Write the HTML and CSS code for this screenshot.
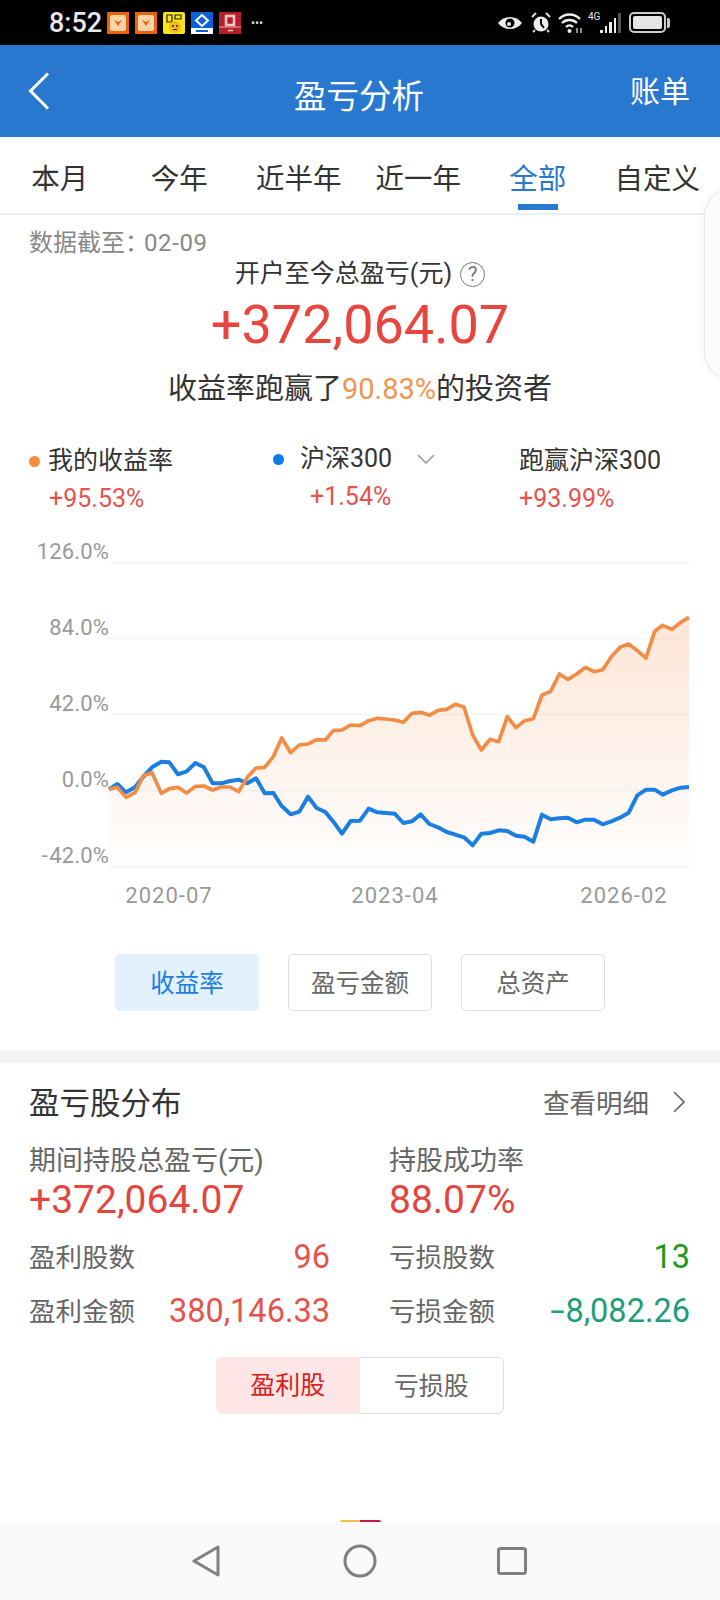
FILE: index.html
```html
<!DOCTYPE html>
<html lang="zh-CN">
<head>
    <meta charset="UTF-8">
    <meta name="viewport" content="width=device-width, initial-scale=1.0">
    <title>盈亏分析</title>
    <link rel="stylesheet" href="styles.css">
</head>
<body>
    <div class="page">
        <div class="status">
            <span class="clock">8:52</span>
            <div class="notes">
                <svg class="note" viewBox="0 0 22 22"><rect width="22" height="22" fill="#e8620f"/><rect x="3" y="3" width="16" height="16" rx="2" fill="#fbd3a4"/><path d="M7 8l4 2 4-2-4 6z" fill="#e8620f"/></svg>
                <svg class="note" viewBox="0 0 22 22"><rect width="22" height="22" fill="#e8620f"/><rect x="3" y="3" width="16" height="16" rx="2" fill="#fbd3a4"/><path d="M7 8l4 2 4-2-4 6z" fill="#e8620f"/></svg>
                <svg class="note" viewBox="0 0 22 22"><rect width="22" height="22" rx="2" fill="#f7e41c"/><path d="M4 3h5v7H4zM12 3h6v4h-6z" fill="none" stroke="#222" stroke-width="1.2"/><circle cx="12" cy="15" r="6" fill="#fbb81a"/><circle cx="10" cy="14" r="1" fill="#222"/><circle cx="14" cy="14" r="1" fill="#222"/><path d="M10 17.500h4" stroke="#222"/></svg>
                <svg class="note" viewBox="0 0 22 22"><rect width="22" height="22" fill="#0b62d6"/><path d="M11 3l6 5.500-6 5.500-6-5.500z" fill="none" stroke="#fff" stroke-width="2"/><rect y="16" width="22" height="6" fill="#fff"/><rect x="5" y="18" width="12" height="2" fill="#0b62d6"/></svg>
                <svg class="note" viewBox="0 0 22 22"><rect width="22" height="22" fill="#b51f2b"/><path d="M7 4h8v9H7z" fill="none" stroke="#f6c9c4" stroke-width="2.500"/><path d="M0 15h22" stroke="#f0a5a0" stroke-width="1"/><path d="M9 18.500h5" stroke="#f6c9c4" stroke-width="1.500"/></svg>
            </div>
            <span class="more">•••</span>
            <div class="sys">
                <svg class="eye" viewBox="0 0 26 14"><path d="M1 7c6-8 18-8 24 0-6 8-18 8-24 0z" fill="#eee"/><circle cx="13" cy="7" r="4.500" fill="#000"/><circle cx="12" cy="8" r="2" fill="#eee"/></svg>
                <svg class="alarm" viewBox="0 0 22 21"><circle cx="11" cy="12" r="7.500" fill="#eee"/><path d="M11 7v5l3 4" fill="none" stroke="#000" stroke-width="2"/><path d="M2 5l4-4M20 5l-4-4M5 18l-2 2M17 18l2 2" stroke="#ddd" stroke-width="2"/></svg>
                <svg class="wifi" viewBox="0 0 25 20"><path d="M1 6c6-6 15-6 21 0M4 10c4-4 11-4 15 0M8 14c2-2 5-2 7 0" fill="none" stroke="#eee" stroke-width="2.400"/><circle cx="11.500" cy="18" r="2" fill="#eee"/><path d="M19 15v5M23 15v5" stroke="#bbb" stroke-width="1.500"/></svg>
                <span class="net">4G</span>
                <div class="bars">
                    <i class="b1"></i><i class="b2"></i><i class="b3"></i><i class="b4"></i><i class="b5"></i>
                </div>
                <div class="batt"><span class="batt-fill"></span></div>
                <span class="batt-nub"></span>
            </div>
        </div>

        <div class="topbar">
            <svg class="back" viewBox="0 0 22 38"><path d="M20 1.500L2.500 19 20 36.500" fill="none" stroke="#fff" stroke-width="3"/></svg>
            <div class="title">盈亏分析</div>
            <div class="bill">账单</div>
        </div>

        <div class="tabs">
            <div class="tab">本月</div>
            <div class="tab">今年</div>
            <div class="tab">近半年</div>
            <div class="tab">近一年</div>
            <div class="tab on">全部</div>
            <div class="tab">自定义</div>
        </div>

        <div class="summary">
            <div class="asof">数据截至：<span class="asof-date">02-09</span></div>
            <div class="total-label">开户至今总盈亏(元)<span class="help">?</span></div>
            <div class="total">+372,064.07</div>
            <div class="beat">收益率跑赢了<span class="beat-num">90.83%</span>的投资者</div>
        </div>

        <div class="stats">
            <div class="stat">
                <div class="stat-head"><i class="dot dot-mine"></i>我的收益率</div>
                <div class="stat-val val-mine">+95.53%</div>
            </div>
            <div class="stat">
                <div class="stat-head head-idx"><i class="dot dot-idx"></i>沪深300
                    <svg class="caret" viewBox="0 0 18 10"><path d="M1 1l8 8 8-8" fill="none" stroke="#999" stroke-width="1.500"/></svg>
                </div>
                <div class="stat-val val-idx">+1.54%</div>
            </div>
            <div class="stat">
                <div class="stat-head">跑赢沪深300</div>
                <div class="stat-val">+93.99%</div>
            </div>
        </div>

        <svg class="chart" viewBox="0 0 2160 1140">
            <defs>
                <linearGradient id="area" gradientUnits="userSpaceOnUse" x1="0" y1="262" x2="0" y2="1010">
                    <stop offset="0" stop-color="#f58a45" stop-opacity="0.22"/>
                    <stop offset="1" stop-color="#f58a45" stop-opacity="0.01"/>
                </linearGradient>
            </defs>
            <g class="grid">
                <path d="M327 98H2067M327 326H2067M327 553H2067M327 782H2067M327 1010H2067"/>
            </g>
            <polygon fill="url(#area)" points="327,1010 327,778 352,772 378,802 405,788 430,737 456,728 484,790 508,776 534,772 560,789 586,769 612,768 638,780 664,771 690,771 716,785 742,742 768,714 794,712 820,680 845,624 872,668 898,645 924,642 950,629 976,630 1000,602 1026,600 1052,585 1080,587 1106,572 1132,565 1158,567 1184,570 1210,577 1236,550 1262,547 1288,556 1314,541 1340,538 1366,523 1392,531 1418,615 1444,660 1470,628 1496,635 1522,560 1548,593 1574,572 1600,566 1626,495 1652,484 1678,432 1704,448 1730,432 1756,412 1782,425 1808,419 1834,380 1860,352 1886,342 1912,362 1938,384 1964,304 1988,286 2016,298 2042,277 2067,262 2067,1010"/>
            <polyline class="line-idx" points="327,778 352,762 378,787 405,772 430,740 456,712 484,695 508,697 534,733 560,724 586,699 612,712 638,760 664,760 690,753 716,749 742,760 768,745 794,790 820,789 845,828 872,853 898,845 924,800 950,834 976,846 1000,875 1026,911 1052,873 1080,872 1106,836 1132,847 1158,849 1184,851 1210,879 1236,874 1262,853 1288,882 1314,892 1340,906 1366,914 1392,922 1418,946 1444,911 1470,909 1496,901 1522,903 1548,917 1574,920 1600,935 1626,854 1652,868 1678,865 1704,863 1730,877 1756,869 1782,869 1808,883 1834,874 1860,863 1886,848 1912,796 1938,779 1964,779 1988,794 2016,781 2042,773 2067,771"/>
            <polyline class="line-mine" points="327,778 352,772 378,802 405,788 430,737 456,728 484,790 508,776 534,772 560,789 586,769 612,768 638,780 664,771 690,771 716,785 742,742 768,714 794,712 820,680 845,624 872,668 898,645 924,642 950,629 976,630 1000,602 1026,600 1052,585 1080,587 1106,572 1132,565 1158,567 1184,570 1210,577 1236,550 1262,547 1288,556 1314,541 1340,538 1366,523 1392,531 1418,615 1444,660 1470,628 1496,635 1522,560 1548,593 1574,572 1600,566 1626,495 1652,484 1678,432 1704,448 1730,432 1756,412 1782,425 1808,419 1834,380 1860,352 1886,342 1912,362 1938,384 1964,304 1988,286 2016,298 2042,277 2067,262"/>
            <g class="axis-y">
                <text x="327" y="88">126.0%</text>
                <text x="327" y="316">84.0%</text>
                <text x="327" y="543">42.0%</text>
                <text x="327" y="771">0.0%</text>
                <text x="327" y="998"><tspan class="neg">-</tspan>42.0%</text>
            </g>
            <g class="axis-x">
                <text x="507" y="1120">2020-07</text>
                <text x="1185" y="1120">2023-04</text>
                <text x="1872" y="1120">2026-02</text>
            </g>
        </svg>

        <div class="modes">
            <div class="mode on">收益率</div>
            <div class="mode">盈亏金额</div>
            <div class="mode">总资产</div>
        </div>

        <div class="band"></div>

        <div class="dist">
            <div class="dist-head">
                <div class="dist-title">盈亏股分布</div>
                <div class="dist-link">查看明细
                    <svg class="link-arrow" viewBox="0 0 12 22"><path d="M1 1l10 10L1 21" fill="none" stroke="#666" stroke-width="1.600"/></svg>
                </div>
            </div>
            <div class="dist-grid">
                <div>
                    <div class="dist-label">期间持股总盈亏(元)</div>
                    <div class="dist-big">+372,064.07</div>
                </div>
                <div>
                    <div class="dist-label">持股成功率</div>
                    <div class="dist-big">88.07%</div>
                </div>
                <div class="dist-row"><span>盈利股数</span><b class="up">96</b></div>
                <div class="dist-row"><span>亏损股数</span><b class="count-down">13</b></div>
                <div class="dist-row row-gap"><span>盈利金额</span><b class="up">380,146.33</b></div>
                <div class="dist-row row-gap"><span>亏损金额</span><b class="down"><span class="neg-wide">-</span>8,082.26</b></div>
            </div>
            <div class="switch">
                <div class="switch-item on">盈利股</div>
                <div class="switch-item">亏损股</div>
            </div>
        </div>

        <div class="peek"></div>

        <div class="nav">
            <svg class="nav-icon nav-back" viewBox="0 0 28 32"><path d="M26 2v28L2 16z" fill="none" stroke="#808080" stroke-width="3" stroke-linejoin="round"/></svg>
            <svg class="nav-icon nav-home" viewBox="0 0 34 34"><circle cx="17" cy="17" r="15" fill="none" stroke="#808080" stroke-width="3"/></svg>
            <svg class="nav-icon nav-recent" viewBox="0 0 30 28"><rect x="1.500" y="1.500" width="27" height="25" rx="2" fill="none" stroke="#808080" stroke-width="3"/></svg>
        </div>

        <div class="drawer"></div>
    </div>
</body>
</html>
```

FILE: styles.css
```css
* { box-sizing: border-box; }
body { margin: 0; background: white; font-family: Roboto, "Noto Sans CJK SC", sans-serif; color: #333; }
.page { position: relative; width: 720px; height: 1600px; display: flex; flex-direction: column; overflow: hidden; }

/* status bar */
.status { height: 45px; background: black; color: #e8e8e8; display: flex; align-items: center; padding-left: 49px; }
.clock { font-size: 27px; font-weight: 500; width: 58px; }
.notes { display: flex; gap: 6px; }
.note { width: 22px; height: 22px; display: block; }
.more { font-size: 12px; letter-spacing: 0; margin-left: 10px; color: #ddd; }
.sys { margin-left: auto; display: flex; align-items: center; padding-right: 50px; }
.eye { width: 26px; height: 14px; margin-right: 7px; }
.alarm { width: 22px; height: 21px; margin-right: 6px; }
.wifi { width: 25px; height: 20px; margin-right: 5px; }
.net { font-size: 10px; width: 12px; align-self: flex-start; margin-top: 0; line-height: 10px; }
.bars { display: flex; align-items: flex-end; gap: 2px; height: 20px; width: 21px; margin-right: 8px; }
.bars i { width: 3px; background: #eee; display: block; }
.b1 { height: 3px; }
.b2 { height: 7px; }
.b3 { height: 11px; }
.b4 { height: 15px; }
.b5 { height: 20px; background: #555 !important; }
.batt { width: 37px; height: 21px; border: 2px solid #ccc; border-radius: 5px; padding: 2px; }
.batt-fill { display: block; height: 100%; background: #e6e6e6; border-radius: 2px; }
.batt-nub { width: 3px; height: 10px; background: #ccc; margin-left: 1px; border-radius: 0 2px 2px 0; }

/* header */
.topbar { height: 92px; background: #2878d0; color: white; display: grid; grid-template-columns: 1fr auto 1fr; align-items: center; padding: 0 30px 0 28px; }
.back { width: 22px; height: 38px; margin-top: -1px; }
.title { font-size: 32.5px; margin-top: 5px; }
.bill { font-size: 30px; text-align: right; margin-bottom: 5px; }

/* period tabs */
.tabs { height: 78px; display: grid; grid-template-columns: repeat(6, 1fr); padding-right: 3px; border-bottom: 2px solid #eee; }
.tab { display: flex; flex-direction: column; align-items: center; font-size: 28.5px; line-height: 40px; padding-top: 23px; color: #333; }
.tab.on { color: #2878d0; }
.tab.on::after { content: ""; width: 40px; height: 6px; margin-top: 4px; background: #2878d0; }

/* summary */
.summary { text-align: center; padding-top: 13px; }
.asof { text-align: left; padding-left: 29px; font-size: 24px; line-height: 30px; color: #888; }
.asof-date { margin-left: -5px; letter-spacing: 0.6px; }
.total-label { margin-top: 1px; font-size: 25px; line-height: 30px; color: #333; display: flex; justify-content: center; align-items: center; gap: 8px; }
.help { width: 25px; height: 25px; border: 1.5px solid #777; border-radius: 50%; font-size: 20px; line-height: 22px; color: #777; }
.total { margin-top: 4px; font-size: 54px; line-height: 64px; color: #e8453f; }
.beat { margin-top: 12px; font-size: 29px; line-height: 40px; color: #333; }
.beat-num { color: #ef9550; }

/* return stats */
.stats { margin-top: 37px; padding-left: 29px; display: grid; grid-template-columns: 244px 246px 1fr; }
.stat-head { display: flex; align-items: center; font-size: 25px; line-height: 30px; color: #333; }
.head-idx { margin-top: -2px; margin-bottom: 2px; }
.dot { width: 11px; height: 11px; border-radius: 50%; margin-right: 8px; }
.dot-mine { background: #f58c3c; }
.dot-idx { background: #0b7bea; margin-right: 16px; }
.caret { width: 18px; height: 10px; margin-left: 25px; }
.stat-val { margin-top: 6px; font-size: 25px; line-height: 34px; color: #e5534b; }
.val-mine { margin-left: 20px; }
.val-idx { margin-left: 37px; }

/* chart */
.chart { display: block; width: 720px; height: 380px; margin-top: 14px; flex: none; }
.grid path { stroke: #f3f3f3; stroke-width: 4; fill: none; }
.line-mine { fill: none; stroke: #f08c46; stroke-width: 11; stroke-linejoin: round; }
.line-idx { fill: none; stroke: #1a7fe0; stroke-width: 12; stroke-linejoin: round; }
.axis-y text { font-size: 66px; fill: #999; text-anchor: end; letter-spacing: 0.5px; }
.axis-y .neg { letter-spacing: 5px; }
.axis-x text { font-size: 66px; fill: #999; text-anchor: middle; letter-spacing: 3px; }

/* chart mode buttons */
.modes { margin-top: 44px; padding-left: 115px; display: flex; gap: 29px; }
.mode { width: 144px; height: 57px; border: 1px solid #ddd; border-radius: 5px; text-align: center; font-size: 24.5px; line-height: 57px; color: #666; }
.mode.on { background: #e3f0fd; border-color: #e3f0fd; color: #1a7fe0; }
.band { height: 13px; margin-top: 39px; background: #f4f4f4; }

/* distribution */
.dist { padding: 20px 29px 0; }
.dist-head { display: flex; justify-content: space-between; align-items: center; height: 40px; }
.dist-title { font-size: 30.5px; line-height: 40px; color: #333; margin-top: 1px; }
.dist-link { display: flex; align-items: center; font-size: 26.5px; color: #666; margin: 0 6px 3px 0; }
.link-arrow { width: 12px; height: 22px; margin-left: 24px; }
.dist-grid { margin-top: 21px; display: grid; grid-template-columns: 301px 301px; column-gap: 59px; }
.dist-label { font-size: 27px; line-height: 34px; color: #666; }
.dist-big { font-size: 39px; line-height: 44px; color: #e5453f; }
.dist-row { display: flex; justify-content: space-between; align-items: center; height: 40px; margin-top: 13px; font-size: 26.5px; color: #666; }
.row-gap { margin-top: 14px; }
.dist-row b { font-weight: 400; font-size: 32.5px; margin-top: 4px; }
.neg-wide { display: inline-block; transform: scaleX(1.6); margin-right: 3px; }
.up { color: #e5534b; }
.down { color: #1f9d7a; }
.count-down { color: #1a9a1a; }

.switch { margin: 28px 0 0 187px; width: 288px; height: 57px; display: flex; }
.switch-item { flex: 1; text-align: center; font-size: 25px; line-height: 57px; color: #666; border: 1px solid #ddd; border-left: 0; border-radius: 0 6px 6px 0; }
.switch-item.on { background: #fee6e6; color: #d81e1e; border: 0; border-radius: 6px 0 0 6px; }

/* bottom */
.peek { margin: auto 0 0 340px; width: 41px; height: 2px; background: linear-gradient(90deg, #f3c04a 50%, #c8174a 50%); border-radius: 20px 20px 0 0; }
.nav { height: 78px; flex: none; background: #fafafa; display: flex; align-items: center; justify-content: center; padding-right: 2px; }
.nav-icon { display: block; }
.nav-back { width: 28px; height: 32px; margin-right: 123px; }
.nav-home { width: 34px; height: 34px; margin-right: 120px; }
.nav-recent { width: 30px; height: 28px; }

.drawer { position: absolute; top: 188px; right: -14px; width: 30px; height: 192px; background: #fbfbfb; border: 1px solid #e4e4e4; border-radius: 28px 0 0 28px; box-shadow: -2px 0 8px rgba(0,0,0,0.04); }
```
